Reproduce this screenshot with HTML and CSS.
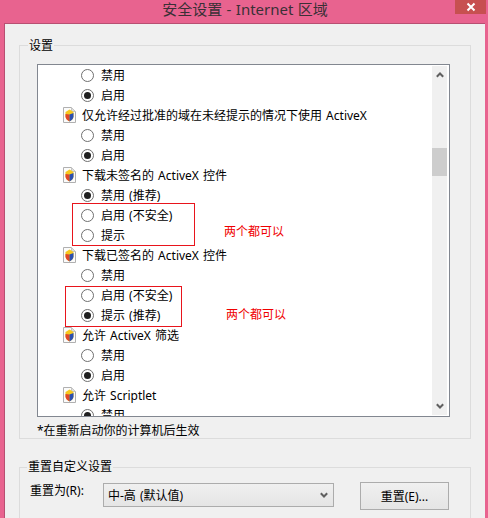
FILE: index.html
```html
<!DOCTYPE html>
<html lang="zh-CN">
<head>
<meta charset="utf-8">
<title>安全设置 - Internet 区域</title>
<link rel="stylesheet" href="styles.css">
</head>
<body>
<svg class="defs" width="0" height="0" aria-hidden="true">
  <symbol id="shield" viewBox="0 0 13 16">
    <path d="M.5.5H8.500L12.500 4.500V15.500H.5Z" fill="#fbfbfb" stroke="#b0b0b0"/>
    <path d="M8.500 .5V4.500H12.500" fill="#dedede" stroke="#c4c4c4"/>
    <path d="M6.500 2.500 10.500 5V9.500C10.500 11.500 8.500 13.500 6.500 14.500 4.500 13.500 2.500 11.500 2.500 9.500V5Z" fill="#f6c81e"/>
    <path d="M2.500 7 6.500 7.500V14.500C4.500 13.500 2.500 11.500 2.500 9.500Z" fill="#e0482a"/>
    <path d="M6.500 7.500 10.500 6V9.500C10.500 11.500 8.500 13.500 6.500 14.500Z" fill="#2b4fb0"/>
  </symbol>
</svg>
<div class="window">
  <header class="titlebar">
    <h1 class="title">安全设置 - Internet 区域</h1>
    <div class="close"><svg width="10" height="10" viewBox="0 0 10 10"><path d="M1.500 1.500 8.500 8.500M8.500 1.500 1.500 8.500" stroke="#fff" stroke-width="2"/></svg></div>
  </header>
  <main class="client">
    <fieldset class="group settings">
      <legend>设置</legend>
      <div class="listbox">
        <div class="rows">
          <div class="row opt"><i class="radio"></i>禁用</div>
          <div class="row opt"><i class="radio on"></i>启用</div>
          <div class="row head"><svg class="ico"><use href="#shield"/></svg>仅允许经过批准的域在未经提示的情况下使用 ActiveX</div>
          <div class="row opt"><i class="radio"></i>禁用</div>
          <div class="row opt"><i class="radio on"></i>启用</div>
          <div class="row head"><svg class="ico"><use href="#shield"/></svg>下载未签名的 ActiveX 控件</div>
          <div class="row opt"><i class="radio on"></i>禁用 (推荐)</div>
          <div class="row opt"><i class="radio"></i>启用 (不安全)</div>
          <div class="row opt"><i class="radio"></i>提示</div>
          <div class="row head"><svg class="ico"><use href="#shield"/></svg>下载已签名的 ActiveX 控件</div>
          <div class="row opt"><i class="radio"></i>禁用</div>
          <div class="row opt"><i class="radio"></i>启用 (不安全)</div>
          <div class="row opt"><i class="radio on"></i>提示 (推荐)</div>
          <div class="row head"><svg class="ico"><use href="#shield"/></svg>允许 ActiveX 筛选</div>
          <div class="row opt"><i class="radio"></i>禁用</div>
          <div class="row opt"><i class="radio on"></i>启用</div>
          <div class="row head"><svg class="ico"><use href="#shield"/></svg>允许 Scriptlet</div>
          <div class="row opt"><i class="radio on"></i>禁用</div>
        </div>
        <div class="scrollbar">
          <svg class="arrow" width="8" height="6" viewBox="0 0 8 6"><path d="M.8 4.800 4 1.500 7.200 4.800" fill="none" stroke="#606060" stroke-width="2"/></svg>
          <div class="track"><div class="thumb"></div></div>
          <svg class="arrow" width="8" height="6" viewBox="0 0 8 6"><path d="M.8 1.200 4 4.500 7.200 1.200" fill="none" stroke="#606060" stroke-width="2"/></svg>
        </div>
      </div>
      <p class="note">*在重新启动你的计算机后生效</p>
    </fieldset>
    <fieldset class="group reset">
      <legend>重置自定义设置</legend>
      <div class="reset-row">
        <label class="reset-label">重置为(R):</label>
        <div class="select">中-高 (默认值)<svg width="8" height="6" viewBox="0 0 8 6"><path d="M.8 1.200 4 4.500 7.200 1.200" fill="none" stroke="#606060" stroke-width="2"/></svg></div>
        <div class="button">重置(E)...</div>
      </div>
    </fieldset>
  </main>
  <div class="mark mark-a"></div>
  <div class="mark mark-b"></div>
  <div class="memo memo-a">两个都可以</div>
  <div class="memo memo-b">两个都可以</div>
</div>
</body>
</html>
```

FILE: styles.css
```css
* { box-sizing: border-box; }
html, body { margin: 0; padding: 0; }
body {
  width: 488px;
  height: 518px;
  overflow: hidden;
  background: #e8638f;
  font-family: "Noto Sans", "Noto Sans CJK SC", sans-serif;
  font-size: 12px;
  word-spacing: 1px;
  color: #000;
}
.defs { position: absolute; }
.window { position: relative; width: 488px; height: 518px; display: flex; flex-direction: column; overflow: hidden; }
.titlebar { height: 23px; flex: none; display: flex; align-items: center; justify-content: center; position: relative; }
.title { margin: 0 0 0 2px; font-size: 15px; font-weight: 400; word-spacing: .5px; color: #3a3036; line-height: 18px; position: relative; top: -3px; }
.close { position: absolute; right: 2px; top: 0; width: 31px; height: 14px; background: #c75050; display: flex; align-items: center; justify-content: center; }
.client {
  flex: 1;
  margin: 0 3px 0 4px;
  border: 1px solid #b84f72;
  border-width: 1px 0 0 1px;
  background: #f0f0f0;
  padding: 21px 14px 0 14px;
}
.group { margin: 0; border: 1px solid #dcdcdc; padding: 0; min-width: 0; }
.group legend { padding: 0 1px; font-size: 12px; line-height: 16px; height: 16px; }
.settings { height: 402px; padding: 11px 20px 0 17px; margin-top: -8px; }
.settings legend { margin-left: -9px; line-height: 18px; }
.listbox {
  height: 353px;
  border: 1px solid #828790;
  background: #fff;
  display: flex;
  justify-content: space-between;
  overflow: hidden;
  padding-right: 1px;
}
.rows { flex: 1; height: 351px; overflow: hidden; }
.row { height: 20px; display: flex; align-items: center; white-space: pre; }
.opt { padding-left: 43px; }
.head { padding-left: 25px; }
.ico { width: 13px; height: 16px; margin-right: 6px; flex: none; }
.radio { width: 13px; height: 13px; border: 1px solid #6f6f6f; border-radius: 50%; background: #fff; margin-right: 7px; flex: none; display: flex; align-items: center; justify-content: center; }
.radio.on::after { content: ""; width: 7px; height: 7px; border-radius: 50%; background: #1f1f1f; }
.scrollbar { width: 15px; flex: none; margin: 1px 1px 0 0; height: 349px; background: #f0f0f0; display: flex; flex-direction: column; align-items: center; }
.arrow { flex: none; margin: 6px 0; }
.track { flex: 1; width: 100%; padding-top: 64px; }
.thumb { height: 28px; background: #cdcdcd; }
.note { margin: 6px 0 0; line-height: 16px; }
.reset { margin-top: 20px; height: 70px; }
.reset legend { margin-left: 7px; }
.reset-row { display: flex; align-items: flex-start; padding: 7px 0 0 10px; }
.reset-label { width: 73px; flex: none; line-height: 18px; }
.select {
  width: 231px;
  height: 24px;
  margin-top: 1px;
  border: 1px solid #acacac;
  background: linear-gradient(#f0f0f0, #e5e5e5);
  padding: 0 5px 0 4px;
  display: flex;
  align-items: center;
  justify-content: space-between;
}
.button {
  width: 89px;
  height: 28px;
  margin-left: 26px;
  border: 1px solid #acacac;
  background: linear-gradient(#f0f0f0, #e5e5e5);
  display: flex;
  align-items: center;
  justify-content: center;
}
.mark { position: absolute; border: 1px solid #e8141c; }
.mark-a { left: 72px; top: 203px; width: 123px; height: 43px; }
.mark-b { left: 65px; top: 286px; width: 117px; height: 41px; }
.memo { position: absolute; color: #f00000; line-height: 16px; white-space: pre; }
.memo-a { left: 224px; top: 224px; }
.memo-b { left: 226px; top: 307px; }
```
